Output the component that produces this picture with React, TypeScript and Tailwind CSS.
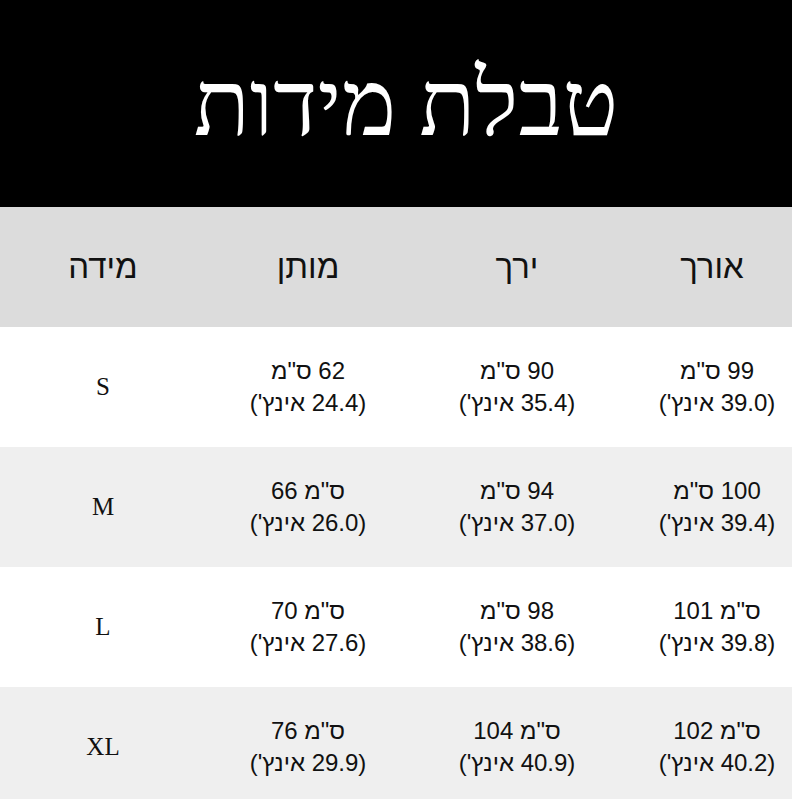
import React from "react";

type Val = { cm: string; inch: string; numFirst: boolean };
type Row = { size: string; bg: string; vals: Val[] };

const rows: Row[] = [
  {
    size: "S",
    bg: "bg-white",
    vals: [
      { cm: "62", inch: "24.4", numFirst: true },
      { cm: "90", inch: "35.4", numFirst: true },
      { cm: "99", inch: "39.0", numFirst: true },
    ],
  },
  {
    size: "M",
    bg: "bg-[#efefef]",
    vals: [
      { cm: "66", inch: "26.0", numFirst: false },
      { cm: "94", inch: "37.0", numFirst: true },
      { cm: "100", inch: "39.4", numFirst: true },
    ],
  },
  {
    size: "L",
    bg: "bg-white",
    vals: [
      { cm: "70", inch: "27.6", numFirst: false },
      { cm: "98", inch: "38.6", numFirst: true },
      { cm: "101", inch: "39.8", numFirst: false },
    ],
  },
  {
    size: "XL",
    bg: "bg-[#efefef]",
    vals: [
      { cm: "76", inch: "29.9", numFirst: false },
      { cm: "104", inch: "40.9", numFirst: false },
      { cm: "102", inch: "40.2", numFirst: false },
    ],
  },
];

const sans = "font-['Liberation_Sans','Arial',sans-serif]";
const serif = "font-['Liberation_Serif','Times_New_Roman',serif]";

function ValCell({ v, extra }: { v: Val; extra?: string }) {
  return (
    <div dir="rtl" className={`flex flex-col items-center justify-center ${sans} text-[24px] leading-[32px] text-[#111] ${extra ?? ""}`}>
      <div dir="rtl">{v.numFirst ? `${v.cm} ס"מ` : `ס"מ ${v.cm}`}</div>
      <div dir="rtl">{`(${v.inch} אינץ')`}</div>
    </div>
  );
}

export default function App() {
  return (
    <div className="w-[792px] h-[799px] overflow-hidden bg-white">
      <div className="h-[207px] bg-black flex items-center justify-center pl-[20px]">
        <h1 dir="rtl" className={`${serif} text-white text-[92px] leading-none`}>
          טבלת מידות
        </h1>
      </div>
      <div className={`grid grid-cols-[206px_204px_214px_168px] h-[120px] bg-[#dcdcdc] ${sans} text-[33px] text-[#111]`}>
        <div className="flex items-center justify-center" dir="rtl">מידה</div>
        <div className="flex items-center justify-center" dir="rtl">מותן</div>
        <div className="flex items-center justify-center" dir="rtl">ירך</div>
        <div className="flex items-center justify-center pl-[8px]" dir="rtl">אורך</div>
      </div>
      {rows.map((r) => (
        <div key={r.size} className={`grid grid-cols-[206px_204px_214px_168px] h-[120px] ${r.bg}`}>
          <div className={`flex items-center justify-center ${serif} text-[25px] text-[#111]`}>{r.size}</div>
          <ValCell v={r.vals[0]} />
          <ValCell v={r.vals[1]} />
          <ValCell v={r.vals[2]} extra="pl-[18px]" />
        </div>
      ))}
    </div>
  );
}
